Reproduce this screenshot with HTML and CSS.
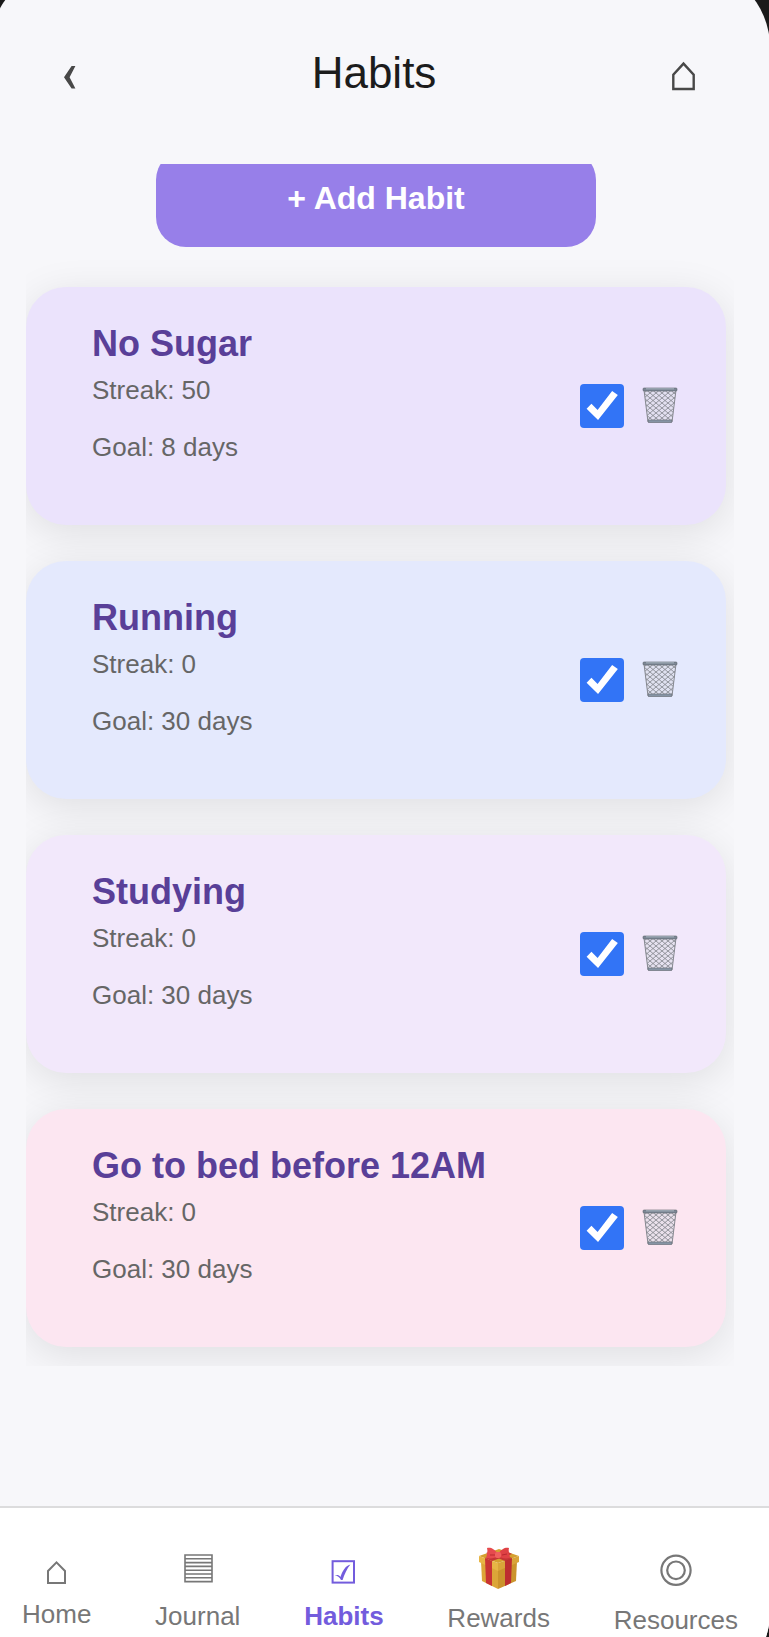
FILE: index.html
```html
<!DOCTYPE html>
<html lang="en">
<head>
    <meta charset="UTF-8">
    <meta name="viewport" content="width=device-width, initial-scale=1.0">
    <title>Habits</title>
    <link rel="stylesheet" href="styles.css">
</head>
<body>

<!-- Shared icons -->
<svg class="sprite" aria-hidden="true">
    <defs>
        <pattern id="mesh" width="6" height="5" patternUnits="userSpaceOnUse">
            <path d="M0 0 L6 5 M6 0 L0 5" stroke="#7d8088" stroke-width="0.8" fill="none"/>
        </pattern>
        <symbol id="trash" viewBox="0 1 44 44">
            <path d="M6 7 L38 7 L34 39 L10 39 Z" fill="#dcdce8" fill-opacity="0.6"/>
            <path d="M6 7 L38 7 L34 39 L10 39 Z" fill="url(#mesh)" stroke="#85888f" stroke-width="1"/>
            <path d="M10 37 H34 L33.6 39.4 H10.4 Z" fill="#8997a8" stroke="#666b74" stroke-width="0.6"/>
            <rect x="5" y="5" width="34" height="3" rx="1" fill="#7d8896" stroke="#5c616a" stroke-width="0.6"/>
            <path d="M8 5.8 H36" stroke="#b4c0cc" stroke-width="0.8"/>
        </symbol>
    </defs>
</svg>

<div class="phone">
    <header class="header">
        <button class="back-btn" aria-label="Back">
            <svg width="36" height="44" viewBox="0 0 36 44"><path d="M14 26.3 L21.6 15 H25.4 L19.6 26.3 L25.4 37.5 H21.6 Z" fill="#484848"/></svg>
        </button>
        <h1>Habits</h1>
        <button class="home-btn" aria-label="Home">
            <svg width="48" height="44" viewBox="0 0 48 44"><path d="M11.3 38 V23.6 L21.5 12.6 L31.7 23.6 V38 Z" fill="none" stroke="#484848" stroke-width="2.4"/></svg>
        </button>
    </header>

    <main class="habits">
        <button class="add-btn">+ Add Habit</button>

        <div class="habit-list">
            <section class="habit lavender">
                <div class="info">
                    <h2 id="habit1">No Sugar</h2>
                    <p>Streak: 50</p>
                    <p>Goal: 8 days</p>
                </div>
                <input type="checkbox" aria-labelledby="habit1" checked>
                <button class="delete-btn" aria-label="Delete No Sugar"><svg width="44" height="44"><use href="#trash"/></svg></button>
            </section>

            <section class="habit blue">
                <div class="info">
                    <h2 id="habit2">Running</h2>
                    <p>Streak: 0</p>
                    <p>Goal: 30 days</p>
                </div>
                <input type="checkbox" aria-labelledby="habit2" checked>
                <button class="delete-btn" aria-label="Delete Running"><svg width="44" height="44"><use href="#trash"/></svg></button>
            </section>

            <section class="habit lilac">
                <div class="info">
                    <h2 id="habit3">Studying</h2>
                    <p>Streak: 0</p>
                    <p>Goal: 30 days</p>
                </div>
                <input type="checkbox" aria-labelledby="habit3" checked>
                <button class="delete-btn" aria-label="Delete Studying"><svg width="44" height="44"><use href="#trash"/></svg></button>
            </section>

            <section class="habit pink">
                <div class="info">
                    <h2 id="habit4">Go to bed before 12AM</h2>
                    <p>Streak: 0</p>
                    <p>Goal: 30 days</p>
                </div>
                <input type="checkbox" aria-labelledby="habit4" checked>
                <button class="delete-btn" aria-label="Delete Go to bed before 12AM"><svg width="44" height="44"><use href="#trash"/></svg></button>
            </section>
        </div>
    </main>

    <nav class="tabs">
        <a href="#home">
            <svg width="40" height="45" viewBox="0 0 40 45"><path d="M11 39 V27 L19.5 18.4 L28 27 V39 Z" fill="none" stroke="#777" stroke-width="2"/></svg>
            Home
        </a>
        <a href="#journal">
            <svg width="40" height="47" viewBox="0 0 40 47">
                <path d="M7 11 H34 V37.6 H7 Z M7 14.8 H34 M7 18.6 H34 M7 22.4 H34 M7 26.2 H34 M7 30 H34 M7 33.8 H34" fill="none" stroke="#777" stroke-width="1.6"/>
            </svg>
            Journal
        </a>
        <a href="#habits" class="active">
            <svg width="40" height="47" viewBox="0 0 40 47">
                <rect x="8.6" y="17.2" width="21.4" height="21.4" fill="none" stroke="#735cdd" stroke-width="2"/>
                <path d="M10.6 31.6 C13 30.6 15 31 16.4 33 C18.4 27 21 22 26.4 20.4 C23 24.6 20.4 30 18.6 36 L17 36 C15.4 33 13.6 31.8 10.6 31.6 Z" fill="#735cdd"/>
            </svg>
            Habits
        </a>
        <a href="#rewards">
            <svg width="40" height="49" viewBox="0 0 40 49">
                <path d="M2 17 L19 23 V45 L3 37 Z" fill="#dca638"/>
                <path d="M19 23 L38 17 L37 37 L19 45 Z" fill="#cb942c"/>
                <path d="M0 12 L20 5 L40 12 L19 19 Z" fill="#d5a02f"/>
                <path d="M0 12 L19 19 V27 L0 18 Z" fill="#e7b545"/>
                <path d="M40 12 L19 19 V27 L40 18 Z" fill="#d9a439"/>
                <path d="M6 14 L13 17 V42 L7 39 Z" fill="#c93434"/>
                <path d="M26 16 L33 14 L32 39 L26 42 Z" fill="#bd2d30"/>
                <path d="M6 14 L27 7 L33 10 L13 17 Z M7 9 L13 7 L33 14 L26 17 Z" fill="#c43535"/>
                <path d="M19 10 C15 4 11 3 8 4 C9 7 8 11 7 14 C12 15 16 14 19 12 Z" fill="#e64a4d"/>
                <path d="M19 10 C23 4 27 3 30 4 C29 7 31 11 31 14 C26 15 22 14 19 12 Z" fill="#df4144"/>
                <rect x="16" y="8" width="6" height="6" rx="2" fill="#f0605e"/>
                <path d="M11 11 L16 11 M23 11 L28 10" stroke="#b92831" stroke-width="1"/>
            </svg>
            Rewards
        </a>
        <a href="#resources">
            <svg width="40" height="51" viewBox="0 0 40 51"><g fill="none" stroke="#777" stroke-width="2.2"><circle cx="20" cy="26.3" r="14.6"/><circle cx="20" cy="26.3" r="8.8"/></g></svg>
            Resources
        </a>
    </nav>
</div>

</body>
</html>
```
FILE: styles.css
```css
* {
    box-sizing: border-box;
}

body {
    font-family: Arial, 'Liberation Sans', sans-serif;
    margin: 0;
    min-height: 100vh;
    overflow: hidden;
    display: flex;
    background: #1a1a1a;
}

button {
    font-family: inherit;
    border: none;
    padding: 0;
    background: none;
    cursor: pointer;
}

svg {
    display: block;
}

.sprite {
    position: absolute;
    width: 0;
    height: 0;
}

/* the frame runs past the window edges, only its corners show */
.phone {
    flex: 1;
    display: flex;
    flex-direction: column;
    margin: -33px -1px -55px -10px;
    border-radius: 80px;
    overflow: hidden;
    background: #f7f7fa;
}

.header {
    display: flex;
    justify-content: space-between;
    align-items: center;
    padding: 81px 60px 66px;
}

h1 {
    margin: 0;
    font-size: 44px;
    font-weight: normal;
    line-height: 50px;
    color: #1c1c1c;
}

.habits {
    overflow: hidden;
    margin: 0 36px;
    padding: 0 8px 19px 0;
}

.add-btn {
    display: block;
    width: 440px;
    max-width: 100%;
    margin: -14px auto 40px;
    padding: 30px;
    border-radius: 30px;
    background: #977fe9;
    color: white;
    font-size: 32px;
    font-weight: bold;
    line-height: 37px;
}

.habit-list {
    display: flex;
    flex-direction: column;
    gap: 36px;
}

.habit {
    display: flex;
    align-items: center;
    gap: 14px;
    padding: 36px 44px 36px 66px;
    border-radius: 40px;
    box-shadow: 0 8px 40px rgba(0, 0, 0, 0.1);
}

.lavender { background: #ebe3fc; }
.blue { background: #e4e9fd; }
.lilac { background: #f2e8fb; }
.pink { background: #fce6f1; }

.info {
    flex: 1;
}

h2 {
    margin: 0 0 10px;
    font-size: 36px;
    line-height: 42px;
    color: #593f98;
}

.info p {
    margin: 0 0 27px;
    font-size: 26px;
    line-height: 30px;
    color: #666;
}

input[type="checkbox"] {
    appearance: none;
    width: 44px;
    height: 44px;
    margin: 0;
    border: 2px solid #888;
    border-radius: 4px;
    background: white;
    cursor: pointer;
}

input[type="checkbox"]:checked {
    border: none;
    background: #3274f6;
}

input[type="checkbox"]:checked::before {
    content: '';
    display: block;
    height: 100%;
    background: white;
    clip-path: polygon(15% 56%, 26% 45%, 40% 59%, 73% 16%, 86% 25%, 41% 82%);
}

.tabs {
    display: flex;
    justify-content: space-between;
    align-items: flex-start;
    margin-top: auto;
    padding: 36px 32px 57px;
    border-top: 2px solid #dcdcdd;
    background: white;
}

.tabs a {
    display: flex;
    flex-direction: column;
    align-items: center;
    gap: 10px;
    font-size: 26px;
    line-height: 30px;
    color: #777;
    text-decoration: none;
}

.tabs .active {
    font-weight: bold;
    color: #735cdd;
}
```
